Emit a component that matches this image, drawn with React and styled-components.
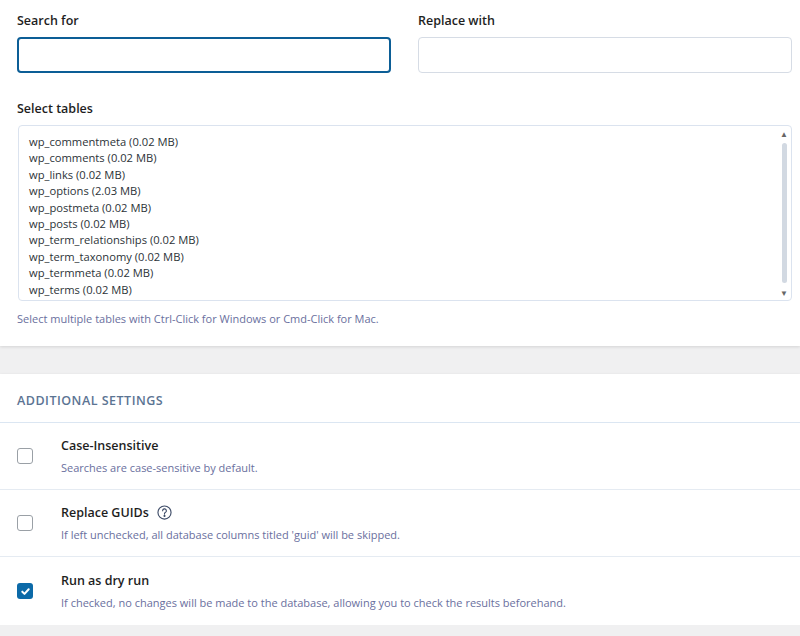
import React from 'react';
import styled, { createGlobalStyle } from 'styled-components';

const Global = createGlobalStyle`
  body { margin: 0; background: #f0f0f1; font-family: "Open Sans", "Liberation Sans", sans-serif; color: #1e1e1e; }
`;

const Card = styled.div`
  background: #fff;
  box-shadow: 0 1px 3px rgba(0,0,0,0.12);
`;

const TopCard = styled(Card)`
  padding: 12px 8px 20px 17px;
  margin-bottom: 28px;
`;

const Row2 = styled.div`
  display: grid;
  grid-template-columns: 374px 374px;
  gap: 27px;
`;

const Label = styled.div`
  font-size: 12.5px;
  font-weight: 600;
  margin-bottom: 8px;
  line-height: 17px;
`;

const Input = styled.div`
  height: 36px;
  box-sizing: border-box;
  border-radius: 4px;
  border: ${p => (p.$focus ? '2px solid #0c5e96' : '1px solid #d6dce5')};
`;

const SelectBox = styled.div`
  margin-top: 8px;
  margin-left: 1px;
  height: 176px;
  box-sizing: border-box;
  border: 1px solid #dbe3ef;
  border-radius: 4px;
  display: flex;
`;

const List = styled.div`
  flex: 1;
  padding: 8px 10px;
  font-size: 11.2px;
  line-height: 16.4px;
  color: #2c3338;
`;

const Scroll = styled.div`
  width: 14px;
  display: flex;
  flex-direction: column;
  align-items: center;
  padding: 2px 0;
  font-size: 8px;
  color: #666;
  .track { flex: 1; width: 5px; margin: 4px 0; background: #d2d9e2; border-radius: 3px; }
`;

const Help = styled.div`
  font-size: 11px;
  color: #6a6f9e;
  margin-top: 10px;
`;

const Header = styled.div`
  padding: 18px 17px 13px;
  font-size: 12.5px;
  font-weight: 600;
  letter-spacing: 0.5px;
  color: #5b7493;
  border-bottom: 1px solid #dbe6f2;
`;

const Setting = styled.div`
  display: flex;
  align-items: center;
  height: 67px;
  box-sizing: border-box;
  padding: 0 17px;
  border-bottom: 1px solid #e5ebf2;
  &:last-child { border-bottom: none; height: 68px; }
`;

const Check = styled.span`
  width: 16px;
  height: 16px;
  box-sizing: border-box;
  border-radius: 3px;
  border: ${p => (p.$on ? 'none' : '1px solid #9aa0a6')};
  background: ${p => (p.$on ? '#0c6aa8' : '#fff')};
  display: flex;
  align-items: center;
  justify-content: center;
  margin-right: 28px;
  flex-shrink: 0;
`;

const Title = styled.div`
  font-size: 12.5px;
  font-weight: 600;
  display: flex;
  align-items: center;
  gap: 8px;
`;

const Desc = styled.div`
  font-size: 11px;
  color: #6a6f9e;
  margin-top: 6px;
`;

const tables = [
  'wp_commentmeta (0.02 MB)', 'wp_comments (0.02 MB)', 'wp_links (0.02 MB)', 'wp_options (2.03 MB)',
  'wp_postmeta (0.02 MB)', 'wp_posts (0.02 MB)', 'wp_term_relationships (0.02 MB)',
  'wp_term_taxonomy (0.02 MB)', 'wp_termmeta (0.02 MB)', 'wp_terms (0.02 MB)',
];

const settings = [
  { t: 'Case-Insensitive', d: 'Searches are case-sensitive by default.' },
  { t: 'Replace GUIDs', d: "If left unchecked, all database columns titled 'guid' will be skipped.", help: true },
  { t: 'Run as dry run', d: 'If checked, no changes will be made to the database, allowing you to check the results beforehand.', on: true },
];

const HelpIcon = () => (
  <svg width="15" height="15" viewBox="0 0 16 16" fill="none" stroke="#3c4a66" strokeWidth="1.2">
    <circle cx="8" cy="8" r="7" />
    <path d="M6 6.2a2 2 0 1 1 2.8 1.8c-.6.3-.8.7-.8 1.3v.4" strokeLinecap="round" />
    <circle cx="8" cy="11.6" r=".5" fill="#3c4a66" />
  </svg>
);

export default function App() {
  return (
    <>
      <Global />
      <TopCard>
        <Row2>
          <div>
            <Label>Search for</Label>
            <Input $focus />
          </div>
          <div>
            <Label>Replace with</Label>
            <Input />
          </div>
        </Row2>
        <Label style={{ marginTop: 27 }}>Select tables</Label>
        <SelectBox>
          <List>{tables.map(t => <div key={t}>{t}</div>)}</List>
          <Scroll><span>▲</span><div className="track" /><span>▼</span></Scroll>
        </SelectBox>
        <Help>Select multiple tables with Ctrl-Click for Windows or Cmd-Click for Mac.</Help>
      </TopCard>
      <Card>
        <Header>ADDITIONAL SETTINGS</Header>
        {settings.map(s => (
          <Setting key={s.t}>
            <Check $on={s.on}>
              {s.on && (
                <svg width="11" height="11" viewBox="0 0 12 12" fill="none" stroke="#fff" strokeWidth="2.2" strokeLinecap="round" strokeLinejoin="round">
                  <path d="M2.5 6.2l2.4 2.4 4.6-5" />
                </svg>
              )}
            </Check>
            <div>
              <Title>{s.t}{s.help && <HelpIcon />}</Title>
              <Desc>{s.d}</Desc>
            </div>
          </Setting>
        ))}
      </Card>
    </>
  );
}
